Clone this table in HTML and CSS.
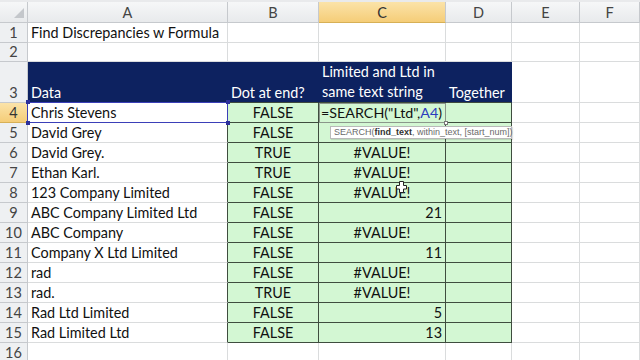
FILE: index.html
```html
<!DOCTYPE html>
<html>
<head>
<meta charset="utf-8">
<link rel="stylesheet" href="styles.css">
</head>
<body>
<div class="sheet">
  <div class="hd corner"><span class="tri"></span></div>
  <div class="hd col">A</div>
  <div class="hd col">B</div>
  <div class="hd col sel">C</div>
  <div class="hd col">D</div>
  <div class="hd col">E</div>
  <div class="hd col">F</div>

  <div class="hd rn">1</div>
  <div class="c">Find Discrepancies w Formula</div>
  <div class="c"></div><div class="c"></div><div class="c"></div><div class="c"></div><div class="c"></div>

  <div class="hd rn">2</div>
  <div class="c"></div><div class="c"></div><div class="c"></div><div class="c"></div><div class="c"></div><div class="c"></div>

  <div class="hd rn">3</div>
  <div class="c nv">Data</div>
  <div class="c nv">Dot at end?</div>
  <div class="c nv wrap">Limited and Ltd in same text string</div>
  <div class="c nv">Together</div>
  <div class="c"></div><div class="c"></div>

  <div class="hd rn sel">4</div>
  <div class="c a ref">Chris Stevens<i class="h tl"></i><i class="h tr"></i><i class="h bl"></i><i class="h br"></i></div>
  <div class="c g ctr">FALSE</div>
  <div class="c g edit">=SEARCH("Ltd",<span class="rf">A4</span>)<i class="fh"></i>
    <div class="tip">SEARCH(<b>find_text</b>, within_text, [start_num])</div>
  </div>
  <div class="c g"></div>
  <div class="c"></div><div class="c"></div>

  <div class="hd rn">5</div>
  <div class="c a">David Grey</div>
  <div class="c g ctr">FALSE</div>
  <div class="c g"></div>
  <div class="c g"></div>
  <div class="c"></div><div class="c"></div>

  <div class="hd rn">6</div>
  <div class="c a">David Grey.</div>
  <div class="c g ctr">TRUE</div>
  <div class="c g ctr">#VALUE!</div>
  <div class="c g"></div>
  <div class="c"></div><div class="c"></div>

  <div class="hd rn">7</div>
  <div class="c a">Ethan Karl.</div>
  <div class="c g ctr">TRUE</div>
  <div class="c g ctr">#VALUE!</div>
  <div class="c g"></div>
  <div class="c"></div><div class="c"></div>

  <div class="hd rn">8</div>
  <div class="c a">123 Company Limited</div>
  <div class="c g ctr">FALSE</div>
  <div class="c g ctr cur">#VALUE!<svg class="cursor" width="11" height="12" viewBox="0 0 11 12"><path d="M3.5 0.5h4v4h3v3.5h-3v3.5h-4v-3.5h-3v-3.5h3z" fill="#fff" stroke="#222" stroke-width="1"/></svg></div>
  <div class="c g"></div>
  <div class="c"></div><div class="c"></div>

  <div class="hd rn">9</div>
  <div class="c a">ABC Company Limited Ltd</div>
  <div class="c g ctr">FALSE</div>
  <div class="c g num">21</div>
  <div class="c g"></div>
  <div class="c"></div><div class="c"></div>

  <div class="hd rn">10</div>
  <div class="c a">ABC Company</div>
  <div class="c g ctr">FALSE</div>
  <div class="c g ctr">#VALUE!</div>
  <div class="c g"></div>
  <div class="c"></div><div class="c"></div>

  <div class="hd rn">11</div>
  <div class="c a">Company X Ltd Limited</div>
  <div class="c g ctr">FALSE</div>
  <div class="c g num">11</div>
  <div class="c g"></div>
  <div class="c"></div><div class="c"></div>

  <div class="hd rn">12</div>
  <div class="c a">rad</div>
  <div class="c g ctr">FALSE</div>
  <div class="c g ctr">#VALUE!</div>
  <div class="c g"></div>
  <div class="c"></div><div class="c"></div>

  <div class="hd rn">13</div>
  <div class="c a">rad.</div>
  <div class="c g ctr">TRUE</div>
  <div class="c g ctr">#VALUE!</div>
  <div class="c g"></div>
  <div class="c"></div><div class="c"></div>

  <div class="hd rn">14</div>
  <div class="c a">Rad Ltd Limited</div>
  <div class="c g ctr">FALSE</div>
  <div class="c g num">5</div>
  <div class="c g"></div>
  <div class="c"></div><div class="c"></div>

  <div class="hd rn">15</div>
  <div class="c a">Rad Limited Ltd</div>
  <div class="c g ctr">FALSE</div>
  <div class="c g num">13</div>
  <div class="c g"></div>
  <div class="c"></div><div class="c"></div>

  <div class="hd rn">16</div>
  <div class="c"></div><div class="c"></div><div class="c"></div><div class="c"></div><div class="c"></div><div class="c"></div>
</div>
</body>
</html>
```
FILE: styles.css
```css
html, body {
  margin: 0;
  padding: 0;
  background: #ffffff;
  overflow: hidden;
}
body {
  width: 640px;
  height: 360px;
  border-top: 2px solid #e9eaec;
  box-sizing: border-box;
}
.sheet {
  display: grid;
  grid-template-columns: 28px 200px 91px 127px 66px 68px 60px;
  grid-template-rows: 21px 20px 19px 41px repeat(13, 20px);
  font-family: Lato, "Liberation Sans", sans-serif;
  font-size: 14.4px;
  color: #111;
}
.c {
  box-sizing: border-box;
  border-right: 1px solid #dadcdd;
  border-bottom: 1px solid #dadcdd;
  padding: 0 3px 1px 3px;
  display: flex;
  align-items: flex-end;
  line-height: 16px;
  white-space: nowrap;
  position: relative;
}
.hd {
  box-sizing: border-box;
  background: linear-gradient(#f6f7f8, #e8eaec);
  border-right: 1px solid #c6c9cd;
  border-bottom: 1px solid #c6c9cd;
  color: #444;
  font-size: 14.5px;
  display: flex;
  align-items: center;
  justify-content: center;
}
.rn {
  background: #eef0f2;
  align-items: flex-end;
  padding-bottom: 1px;
  line-height: 16px;
}
.hd.sel {
  background: linear-gradient(#fbe3a9, #f5cd78);
  border-bottom-color: #d7b056;
  color: #333;
}
.corner {
  position: relative;
}
.tri {
  position: absolute;
  right: 3px;
  bottom: 4px;
  width: 0;
  height: 0;
  border-left: 10px solid transparent;
  border-bottom: 10px solid #c4c7cb;
}
.nv {
  background: #0d2260;
  color: #ffffff;
  border-right-color: #0d2260;
  border-bottom-color: #3d4a3d;
}
.wrap {
  white-space: normal;
  line-height: 20px;
  padding-bottom: 0;
}
.g {
  background: #d3f7d3;
  border-right-color: #3f4d3f;
  border-bottom-color: #3f4d3f;
}
.a {
  border-right-color: #3f4d3f;
}
.ctr {
  justify-content: center;
}
.num {
  justify-content: flex-end;
}
.ref::after {
  content: "";
  position: absolute;
  left: -1px;
  top: -1px;
  right: -1px;
  bottom: -1px;
  border: 1px solid #3b3fb8;
  pointer-events: none;
}
.h {
  position: absolute;
  width: 4px;
  height: 4px;
  background: #2c2f9a;
  z-index: 2;
}
.tl { left: -2px; top: -3px; }
.tr { right: -3px; top: -3px; }
.bl { left: -2px; bottom: -3px; }
.br { right: -3px; bottom: -3px; }
.edit {
  outline: 1px solid #8a968a;
  outline-offset: -1px;
  z-index: 3;
  font-size: 14.3px;
  padding-left: 2px;
}
.rf {
  color: #2a3bbd;
}
.fh {
  position: absolute;
  right: -3px;
  bottom: -3px;
  width: 4px;
  height: 4px;
  background: #ffffff;
  border: 1px solid #777;
  box-sizing: border-box;
}
.tip {
  position: absolute;
  left: 11px;
  top: 23px;
  width: 182px;
  height: 13px;
  box-sizing: border-box;
  background: #ffffff;
  border: 1px solid #b9b9b9;
  box-shadow: 1px 1px 1px rgba(0,0,0,0.12);
  font-family: "Liberation Sans", Arial, sans-serif;
  font-size: 9px;
  line-height: 11px;
  color: #6a6a6a;
  padding-left: 3px;
  z-index: 5;
}
.tip b {
  color: #333;
}
.cursor {
  position: absolute;
  left: 77px;
  top: -2px;
}
```
